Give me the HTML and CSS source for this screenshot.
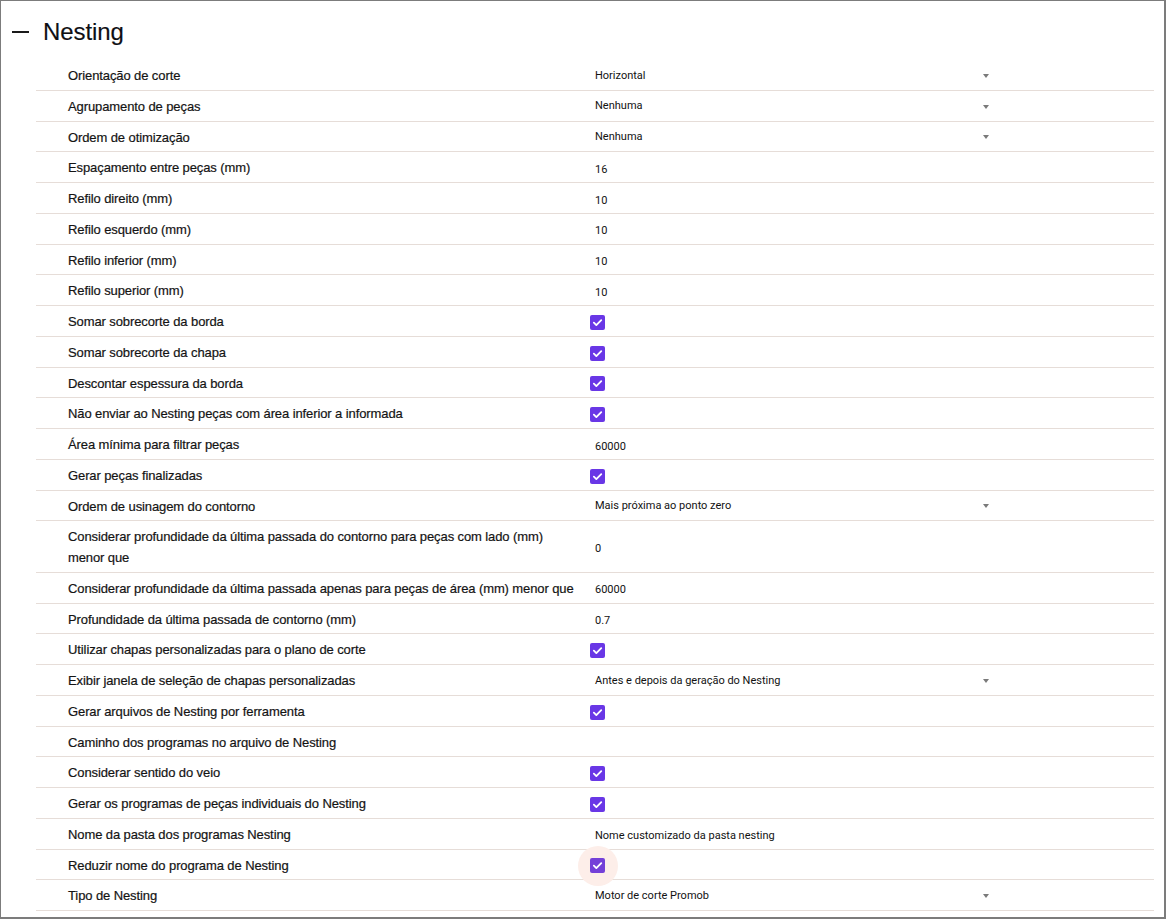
FILE: index.html
```html
<!DOCTYPE html>
<html lang="pt-BR">
<head>
<meta charset="utf-8">
<title>Nesting</title>
<link rel="stylesheet" href="styles.css">
</head>
<body>
<div class="frame">
  <div class="header">
    <span class="collapse"></span>
    <h1 class="title">Nesting</h1>
  </div>
  <div class="list">
    <div class="row"><div class="label">Orientação de corte</div><div class="value"><div class="select"><span>Horizontal</span><i class="arrow"></i></div></div></div>
    <div class="row"><div class="label">Agrupamento de peças</div><div class="value"><div class="select"><span>Nenhuma</span><i class="arrow"></i></div></div></div>
    <div class="row"><div class="label">Ordem de otimização</div><div class="value"><div class="select"><span>Nenhuma</span><i class="arrow"></i></div></div></div>
    <div class="row"><div class="label">Espaçamento entre peças (mm)</div><div class="value"><span class="text">16</span></div></div>
    <div class="row"><div class="label">Refilo direito (mm)</div><div class="value"><span class="text">10</span></div></div>
    <div class="row"><div class="label">Refilo esquerdo (mm)</div><div class="value"><span class="text">10</span></div></div>
    <div class="row"><div class="label">Refilo inferior (mm)</div><div class="value"><span class="text">10</span></div></div>
    <div class="row"><div class="label">Refilo superior (mm)</div><div class="value"><span class="text">10</span></div></div>
    <div class="row"><div class="label">Somar sobrecorte da borda</div><div class="value"><span class="check"><svg viewBox="0 0 14 14"><path d="M3.6 7.2l2.3 2.2 4.6-4.6"/></svg></span></div></div>
    <div class="row"><div class="label">Somar sobrecorte da chapa</div><div class="value"><span class="check"><svg viewBox="0 0 14 14"><path d="M3.6 7.2l2.3 2.2 4.6-4.6"/></svg></span></div></div>
    <div class="row"><div class="label">Descontar espessura da borda</div><div class="value"><span class="check"><svg viewBox="0 0 14 14"><path d="M3.6 7.2l2.3 2.2 4.6-4.6"/></svg></span></div></div>
    <div class="row"><div class="label">Não enviar ao Nesting peças com área inferior a informada</div><div class="value"><span class="check"><svg viewBox="0 0 14 14"><path d="M3.6 7.2l2.3 2.2 4.6-4.6"/></svg></span></div></div>
    <div class="row"><div class="label">Área mínima para filtrar peças</div><div class="value"><span class="text">60000</span></div></div>
    <div class="row"><div class="label">Gerar peças finalizadas</div><div class="value"><span class="check"><svg viewBox="0 0 14 14"><path d="M3.6 7.2l2.3 2.2 4.6-4.6"/></svg></span></div></div>
    <div class="row"><div class="label">Ordem de usinagem do contorno</div><div class="value"><div class="select"><span>Mais próxima ao ponto zero</span><i class="arrow"></i></div></div></div>
    <div class="row"><div class="label">Considerar profundidade da última passada do contorno para peças com lado (mm) menor que</div><div class="value"><span class="text">0</span></div></div>
    <div class="row"><div class="label">Considerar profundidade da última passada apenas para peças de área (mm) menor que</div><div class="value"><span class="text">60000</span></div></div>
    <div class="row"><div class="label">Profundidade da última passada de contorno (mm)</div><div class="value"><span class="text">0.7</span></div></div>
    <div class="row"><div class="label">Utilizar chapas personalizadas para o plano de corte</div><div class="value"><span class="check"><svg viewBox="0 0 14 14"><path d="M3.6 7.2l2.3 2.2 4.6-4.6"/></svg></span></div></div>
    <div class="row"><div class="label">Exibir janela de seleção de chapas personalizadas</div><div class="value"><div class="select"><span>Antes e depois da geração do Nesting</span><i class="arrow"></i></div></div></div>
    <div class="row"><div class="label">Gerar arquivos de Nesting por ferramenta</div><div class="value"><span class="check"><svg viewBox="0 0 14 14"><path d="M3.6 7.2l2.3 2.2 4.6-4.6"/></svg></span></div></div>
    <div class="row"><div class="label">Caminho dos programas no arquivo de Nesting</div><div class="value"><span class="text"></span></div></div>
    <div class="row"><div class="label">Considerar sentido do veio</div><div class="value"><span class="check"><svg viewBox="0 0 14 14"><path d="M3.6 7.2l2.3 2.2 4.6-4.6"/></svg></span></div></div>
    <div class="row"><div class="label">Gerar os programas de peças individuais do Nesting</div><div class="value"><span class="check"><svg viewBox="0 0 14 14"><path d="M3.6 7.2l2.3 2.2 4.6-4.6"/></svg></span></div></div>
    <div class="row"><div class="label">Nome da pasta dos programas Nesting</div><div class="value"><span class="text">Nome customizado da pasta nesting</span></div></div>
    <div class="row"><div class="label">Reduzir nome do programa de Nesting</div><div class="value"><span class="check focused"><svg viewBox="0 0 14 14"><path d="M3.6 7.2l2.3 2.2 4.6-4.6"/></svg></span></div></div>
    <div class="row"><div class="label">Tipo de Nesting</div><div class="value"><div class="select"><span>Motor de corte Promob</span><i class="arrow"></i></div></div></div>
  </div>
</div>
</body>
</html>
```
FILE: styles.css
```css
html, body {
  margin: 0;
  padding: 0;
  background: #ffffff;
}

.frame {
  box-sizing: border-box;
  width: 1166px;
  height: 919px;
  border-top: 1px solid #7c7c7c;
  border-left: 1px solid #7c7c7c;
  border-right: 2px solid #7c7c7c;
  border-bottom: 2px solid #7c7c7c;
  background: #ffffff;
  overflow: hidden;
  font-family: "Liberation Sans", Arial, sans-serif;
  color: #141414;
}

.header {
  display: flex;
  align-items: flex-start;
  height: 59px;
  padding-left: 11px;
  padding-top: 17px;
  box-sizing: border-box;
}

.collapse {
  display: block;
  width: 17px;
  height: 1.5px;
  background: #1a1a1a;
  margin-top: 13px;
}

.title {
  margin: 0 0 0 14px;
  font-size: 24px;
  font-weight: normal;
  line-height: 28px;
  color: #0f0f14;
  letter-spacing: -0.1px;
  -webkit-text-stroke: 0.15px #0f0f14;
}

.list {
  margin-left: 35px;
  margin-right: 10px;
}

.row {
  display: grid;
  grid-template-columns: 509px 1fr;
  column-gap: 13px;
  align-items: center;
  padding: 6px 0 3px 32px;
  border-bottom: 1px solid #e6ddd8;
  min-height: 20.75px;
}

.label {
  font-size: 13px;
  line-height: 20.75px;
  color: #141414;
  letter-spacing: -0.1px;
  -webkit-text-stroke: 0.2px #141414;
}

.value {
  font-family: Roboto, "Liberation Sans", sans-serif;
  font-size: 11px;
  line-height: 20.75px;
  color: #121212;
  display: flex;
  align-items: center;
  position: relative;
  top: 1.5px;
}

.text {
  padding-left: 5px;
}

.select {
  display: flex;
  align-items: center;
  justify-content: space-between;
  width: 400px;
  padding-left: 5px;
  box-sizing: border-box;
  position: relative;
  top: -2px;
}

.arrow {
  display: block;
  width: 0;
  height: 0;
  border-left: 3.5px solid transparent;
  border-right: 3.5px solid transparent;
  border-top: 4px solid #7a7a7a;
  margin-right: 1px;
}

.check {
  position: relative;
  display: block;
  width: 15px;
  height: 15px;
  border-radius: 2px;
  background: #6937e6;
  z-index: 0;
  margin-top: -3px;
}

.check svg {
  position: relative;
  display: block;
  width: 15px;
  height: 15px;
  fill: none;
  stroke: #ffffff;
  stroke-width: 1.7;
  stroke-linecap: round;
  stroke-linejoin: round;
  z-index: 1;
}

.check.focused {
  background: #7440d8;
}

.check.focused::before {
  content: "";
  position: absolute;
  left: 50%;
  top: 50%;
  width: 40px;
  height: 40px;
  margin-left: -20px;
  margin-top: -20px;
  border-radius: 50%;
  background: #fdeee9;
  z-index: -1;
}

.check.focused::after {
  content: "";
  position: absolute;
  inset: 0;
  border-radius: 2px;
  background: #7440d8;
}
```
